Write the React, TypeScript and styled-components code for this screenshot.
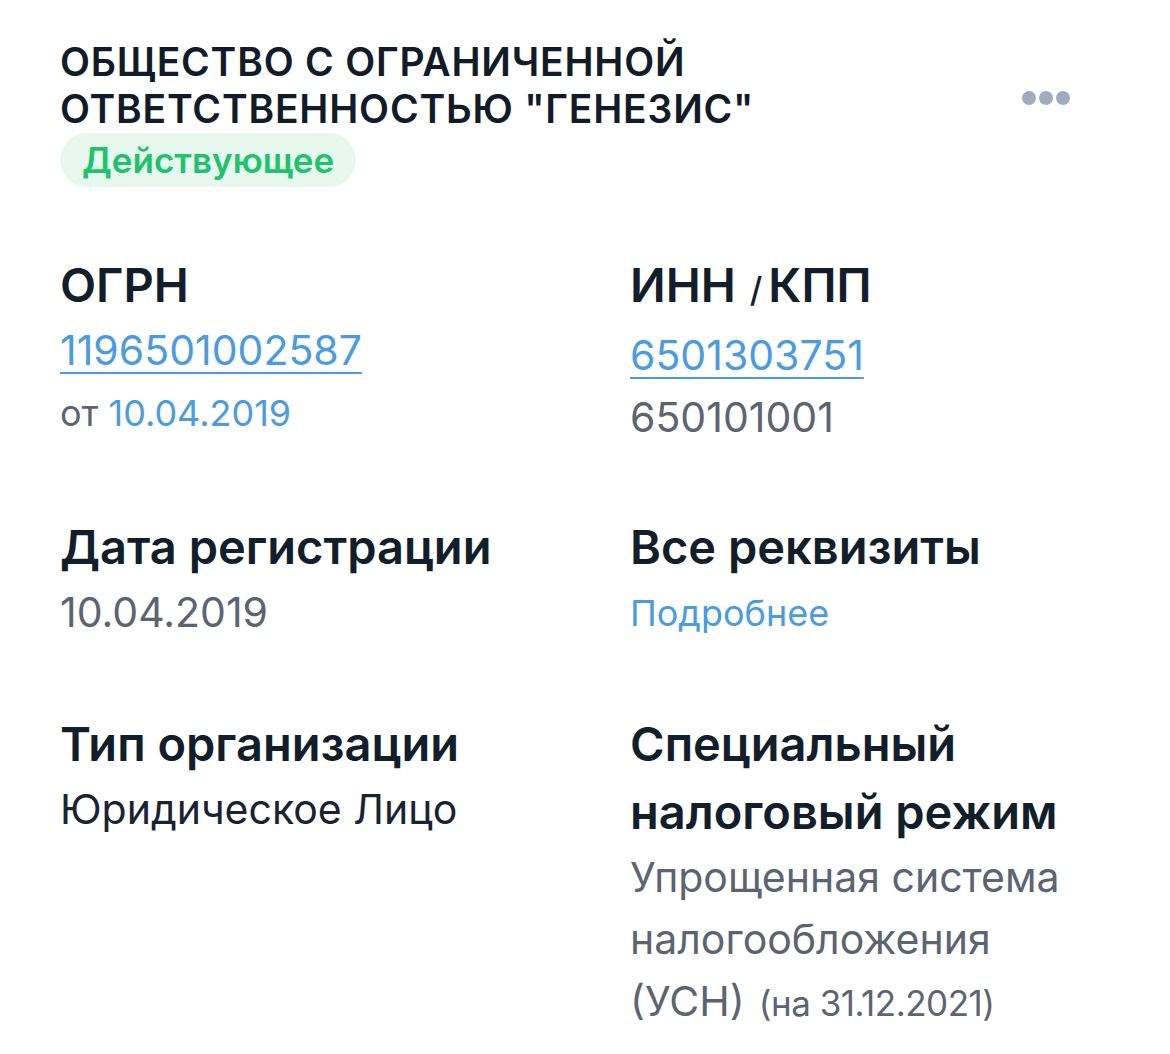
import React from "react";
import styled, { createGlobalStyle } from "styled-components";

const GlobalStyle = createGlobalStyle`
  html, body { margin: 0; padding: 0; background: #ffffff; }
  body { font-family: Inter, "Noto Sans", "Liberation Sans", sans-serif; -webkit-font-smoothing: antialiased; }
  * { box-sizing: border-box; }
`;

const Card = styled.div`
  width: 1170px;
  min-height: 1054px;
  background: #ffffff;
  padding: 38px 100px 40px 60px;
  color: #131e2b;
`;

const Header = styled.div`
  display: flex;
  justify-content: space-between;
  align-items: flex-start;
`;

const TitleBlock = styled.div`
  display: flex;
  flex-direction: column;
  align-items: flex-start;
`;

const Title = styled.h1`
  margin: 0;
  font-size: 39px;
  line-height: 47px;
  font-weight: 600;
  letter-spacing: 0.8px;
  text-transform: uppercase;
  color: #121c29;
`;

const StatusBadge = styled.span`
  margin-top: 1px;
  display: inline-flex;
  align-items: center;
  height: 54px;
  padding: 0 22px;
  border-radius: 27px;
  background: #e7f9ef;
  color: #1fc36c;
  font-size: 35px;
  font-weight: 600;
  letter-spacing: 0;
`;

const MoreButton = styled.button`
  margin-top: 53px;
  display: flex;
  gap: 3px;
  padding: 0;
  border: 0;
  background: transparent;
  cursor: pointer;
`;

const Dot = styled.span`
  width: 14px;
  height: 14px;
  border-radius: 50%;
  background: #a2abbb;
`;

const Grid = styled.div`
  margin-top: 64px;
  display: grid;
  grid-template-columns: 570px 1fr;
  row-gap: 65px;
`;

const Item = styled.div`
  display: flex;
  flex-direction: column;
  align-items: flex-start;
`;

const Label = styled.div`
  font-size: 47px;
  line-height: 68px;
  font-weight: 600;
  letter-spacing: 0;
  color: #131e2b;
`;

const Slash = styled.span`
  font-size: 34px;
  font-weight: 500;
  margin: 0 6px 0 14px;
`;

const Value = styled.div<{ $tone?: "gray" | "dark" | "blue"; $small?: boolean }>`
  font-size: ${(p) => (p.$small ? "36px" : "41px")};
  line-height: ${(p) => (p.$small ? "64px" : "62px")};
  font-weight: 400;
  letter-spacing: 0;
  color: ${(p) =>
    p.$tone === "dark" ? "#1a2331" : p.$tone === "blue" ? "#4b9be2" : "#5d6471"};
`;

const Link = styled.a<{ $underline?: boolean }>`
  color: #4b9be2;
  text-decoration: ${(p) => (p.$underline ? "underline" : "none")};
  text-decoration-thickness: 2px;
  text-underline-offset: 7px;
  cursor: pointer;
`;

const Note = styled.span`
  font-size: 35px;
  letter-spacing: -0.5px;
  margin-left: 14px;
`;

export default function App() {
  return (
    <>
      <GlobalStyle />
      <Card>
        <Header>
          <TitleBlock>
            <Title>
              Общество с ограниченной
              <br />
              ответственностью "Генезис"
            </Title>
            <StatusBadge>Действующее</StatusBadge>
          </TitleBlock>
          <MoreButton aria-label="Ещё">
            <Dot />
            <Dot />
            <Dot />
          </MoreButton>
        </Header>

        <Grid>
          <Item>
            <Label>ОГРН</Label>
            <Value>
              <Link $underline>1196501002587</Link>
            </Value>
            <Value $small>
              от <Link>10.04.2019</Link>
            </Value>
          </Item>
          <Item>
            <Label>
              ИНН<Slash>/</Slash>КПП
            </Label>
            <Value>
              <Link $underline>6501303751</Link>
            </Value>
            <Value>650101001</Value>
          </Item>

          <Item>
            <Label>Дата регистрации</Label>
            <Value>10.04.2019</Value>
          </Item>
          <Item>
            <Label>Все реквизиты</Label>
            <Value $small>
              <Link>Подробнее</Link>
            </Value>
          </Item>

          <Item>
            <Label>Тип организации</Label>
            <Value $tone="dark">Юридическое Лицо</Value>
          </Item>
          <Item>
            <Label>
              Специальный
              <br />
              налоговый режим
            </Label>
            <Value>
              Упрощенная система
              <br />
              налогообложения
              <br />
              (УСН)<Note>(на 31.12.2021)</Note>
            </Value>
          </Item>
        </Grid>
      </Card>
    </>
  );
}
